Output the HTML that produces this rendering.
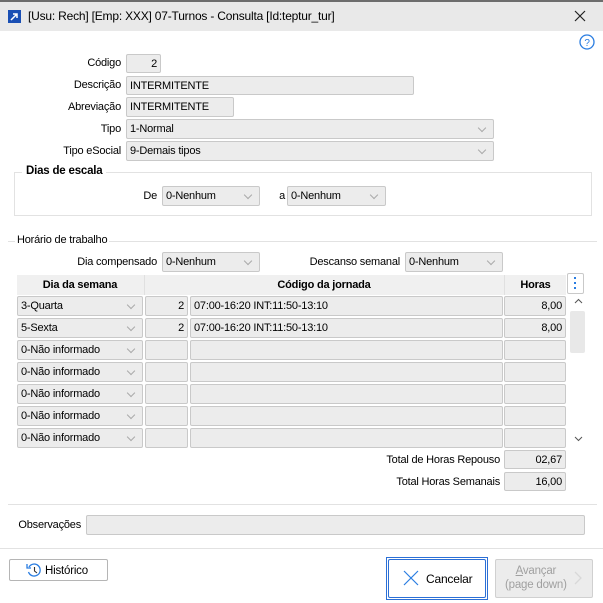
<!DOCTYPE html>
<html><head><meta charset="utf-8"><style>
*{box-sizing:border-box;margin:0;padding:0}
body{width:603px;height:603px;position:relative;background:#fff;font-family:"Liberation Sans",sans-serif;font-size:11px;color:#000;overflow:hidden;letter-spacing:-0.2px}
.a{position:absolute}
.f{position:absolute;background:#ececec;border:1px solid #c9c9c9;border-radius:2px;padding-left:3px;line-height:18px;white-space:nowrap;overflow:hidden}
.r{text-align:right;padding-right:3px}
.l{position:absolute;text-align:right;line-height:18px;white-space:nowrap}
.s::after{content:"";position:absolute;right:8px;top:5px;width:5px;height:5px;border-right:1px solid #aaa;border-bottom:1px solid #aaa;transform:rotate(45deg)}
.h{position:absolute;top:275px;height:20px;line-height:20px;font-weight:bold;text-align:center;background:#f0f0f0}
</style></head><body>
<div class="a" style="left:0;top:0;width:603px;height:2px;background:#6d6d6d"></div>
<div class="a" style="left:0;top:2px;width:603px;height:29px;background:#e9e9e9"></div>
<div class="a" style="left:8px;top:10px;width:13px;height:13px;background:#1a4fb4"></div>
<svg class="a" style="left:8px;top:10px" width="13" height="13"><path d="M3 10L9 4M5 4H9V8" stroke="#fff" stroke-width="1.5" fill="none"/></svg>
<div class="a" style="left:28px;top:9px;font-size:12px">[Usu: Rech] [Emp: XXX] 07-Turnos - Consulta [Id:teptur_tur]</div>
<svg class="a" style="left:574px;top:10px" width="12" height="12"><path d="M1 1L11 11M11 1L1 11" stroke="#222" stroke-width="1.2"/></svg>
<svg class="a" style="left:579px;top:34px" width="16" height="16"><circle cx="8" cy="8" r="7" stroke="#2a7de1" stroke-width="1.3" fill="none"/><text x="8" y="12" font-size="10" text-anchor="middle" fill="#2a7de1" font-family="Liberation Sans">?</text></svg>

<div class="l" style="right:482px;top:54px">Código</div><div class="f r" style="left:126px;top:54px;width:35px;height:19px">2</div>
<div class="l" style="right:482px;top:76px">Descrição</div><div class="f" style="left:126px;top:76px;width:288px;height:19px">INTERMITENTE</div>
<div class="l" style="right:482px;top:98px">Abreviação</div><div class="f" style="left:126px;top:97px;width:108px;height:20px">INTERMITENTE</div>
<div class="l" style="right:482px;top:120px">Tipo</div><div class="f s" style="left:126px;top:119px;width:368px;height:20px">1-Normal</div>
<div class="l" style="right:482px;top:142px">Tipo eSocial</div><div class="f s" style="left:126px;top:141px;width:368px;height:20px">9-Demais tipos</div>

<div class="a" style="left:14px;top:172px;width:578px;height:44px;border:1px solid #e2e2e2"></div>
<div class="a" style="left:22px;top:165px;padding:0 4px;background:#fff;font-weight:bold;font-size:11.5px">Dias de escala</div>
<div class="l" style="right:446px;top:187px">De</div><div class="f s" style="left:162px;top:186px;width:98px;height:20px">0-Nenhum</div>
<div class="l" style="right:318px;top:187px">a</div><div class="f s" style="left:287px;top:186px;width:99px;height:20px">0-Nenhum</div>

<div class="a" style="left:8px;top:241px;width:589px;height:1px;background:#e2e2e2"></div>
<div class="a" style="left:15px;top:234px;padding:0 2px;background:#fff">Horário de trabalho</div>
<div class="l" style="right:446px;top:253px">Dia compensado</div><div class="f s" style="left:162px;top:252px;width:98px;height:20px">0-Nenhum</div>
<div class="l" style="right:203px;top:253px">Descanso semanal</div><div class="f s" style="left:405px;top:252px;width:98px;height:20px">0-Nenhum</div>

<div class="a" style="left:17px;top:275px;width:549px;height:20px;background:#f0f0f0"></div>
<div class="h" style="left:17px;width:126px">Dia da semana</div>
<div class="h" style="left:144px;width:359px;border-left:1px solid #e0e0e0">Código da jornada</div>
<div class="h" style="left:504px;width:62px;border-left:1px solid #e0e0e0">Horas</div>
<div class="a" style="left:567px;top:273px;width:17px;height:21px;border:1px solid #c9c9c9;border-radius:2px;background:#fff"></div>
<div class="a" style="left:574px;top:277px;width:2px;height:2px;background:#2a7de1;box-shadow:0 5px #2a7de1,0 10px #2a7de1"></div>

<div class="f s" style="left:17px;top:296px;width:126px;height:20px">3-Quarta</div><div class="f r" style="left:145px;top:296px;width:43px;height:20px">2</div><div class="f" style="left:190px;top:296px;width:313px;height:20px">07:00-16:20 INT:11:50-13:10</div><div class="f r" style="left:504px;top:296px;width:62px;height:20px">8,00</div>
<div class="f s" style="left:17px;top:318px;width:126px;height:20px">5-Sexta</div><div class="f r" style="left:145px;top:318px;width:43px;height:20px">2</div><div class="f" style="left:190px;top:318px;width:313px;height:20px">07:00-16:20 INT:11:50-13:10</div><div class="f r" style="left:504px;top:318px;width:62px;height:20px">8,00</div>
<div class="f s" style="left:17px;top:340px;width:126px;height:20px">0-Não informado</div><div class="f" style="left:145px;top:340px;width:43px;height:20px"></div><div class="f" style="left:190px;top:340px;width:313px;height:20px"></div><div class="f" style="left:504px;top:340px;width:62px;height:20px"></div>
<div class="f s" style="left:17px;top:362px;width:126px;height:20px">0-Não informado</div><div class="f" style="left:145px;top:362px;width:43px;height:20px"></div><div class="f" style="left:190px;top:362px;width:313px;height:20px"></div><div class="f" style="left:504px;top:362px;width:62px;height:20px"></div>
<div class="f s" style="left:17px;top:384px;width:126px;height:20px">0-Não informado</div><div class="f" style="left:145px;top:384px;width:43px;height:20px"></div><div class="f" style="left:190px;top:384px;width:313px;height:20px"></div><div class="f" style="left:504px;top:384px;width:62px;height:20px"></div>
<div class="f s" style="left:17px;top:406px;width:126px;height:20px">0-Não informado</div><div class="f" style="left:145px;top:406px;width:43px;height:20px"></div><div class="f" style="left:190px;top:406px;width:313px;height:20px"></div><div class="f" style="left:504px;top:406px;width:62px;height:20px"></div>
<div class="f s" style="left:17px;top:428px;width:126px;height:20px">0-Não informado</div><div class="f" style="left:145px;top:428px;width:43px;height:20px"></div><div class="f" style="left:190px;top:428px;width:313px;height:20px"></div><div class="f" style="left:504px;top:428px;width:62px;height:20px"></div>
<svg class="a" style="left:574px;top:298px" width="9" height="6"><path d="M1 5L4.5 1.5L8 5" stroke="#555" fill="none"/></svg>
<div class="a" style="left:570px;top:311px;width:15px;height:42px;background:#e8e8e8;border-radius:2px"></div>
<svg class="a" style="left:574px;top:436px" width="9" height="6"><path d="M1 1L4.5 4.5L8 1" stroke="#555" fill="none"/></svg>

<div class="l" style="right:103px;top:451px">Total de Horas Repouso</div><div class="f r" style="left:504px;top:450px;width:62px;height:19px">02,67</div>
<div class="l" style="right:103px;top:473px">Total Horas Semanais</div><div class="f r" style="left:504px;top:472px;width:62px;height:19px">16,00</div>

<div class="a" style="left:8px;top:504px;width:589px;height:1px;background:#e2e2e2"></div>
<div class="l" style="right:522px;top:516px">Observações</div><div class="f" style="left:86px;top:515px;width:499px;height:20px"></div>
<div class="a" style="left:0;top:548px;width:603px;height:1px;background:#e2e2e2"></div>

<div class="a" style="left:9px;top:559px;width:99px;height:22px;border:1px solid #b5b5b5;border-radius:2px;background:#fff"></div>
<svg class="a" style="left:25px;top:561px" width="18" height="18"><path d="M4 6A6 6 0 1 1 3.5 11" stroke="#2a7de1" stroke-width="1.3" fill="none"/><path d="M2 3V7H6" stroke="#2a7de1" stroke-width="1.3" fill="none"/><path d="M9.5 6V10L12 12" stroke="#333" stroke-width="1.1" fill="none"/></svg>
<div class="a" style="left:45px;top:565px;font-size:11.5px">Histórico</div>

<div class="a" style="left:386px;top:557px;width:102px;height:43px;border:1px solid #2b6fd6;"></div>
<div class="a" style="left:388px;top:559px;width:98px;height:39px;border:1px solid #2b6fd6;border-radius:2px;background:#fff"></div>
<svg class="a" style="left:403px;top:570px" width="16" height="16"><path d="M1 1L15 15M15 1L1 15" stroke="#2a7de1" stroke-width="1.2"/></svg>
<div class="a" style="left:426px;top:572px;font-size:12px">Cancelar</div>

<div class="a" style="left:495px;top:559px;width:98px;height:39px;border:1px solid #d0d0d0;border-radius:2px;background:#ececec"></div>
<div class="a" style="left:505px;top:564px;color:#a0a0a0;text-align:center;line-height:14px;font-size:11.5px"><u>A</u>vançar<br>(page down)</div>
<svg class="a" style="left:574px;top:571px" width="8" height="14"><path d="M1 1L7 7L1 13" stroke="#d8d8d8" stroke-width="1.3" fill="none"/></svg>
</body></html>
